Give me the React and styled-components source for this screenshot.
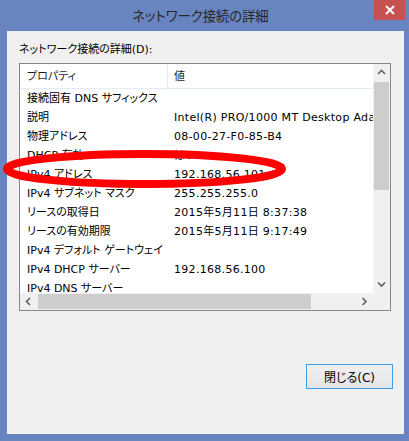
import React from 'react';
import styled, { createGlobalStyle } from 'styled-components';

const GlobalStyle = createGlobalStyle`
    html, body {
        margin: 0;
        padding: 0;
        background: #ffffff;
    }
    body {
        font-family: "DejaVu Sans", "Noto Sans CJK JP", sans-serif;
        font-feature-settings: "palt";
        font-size: 11px;
        color: #000000;
    }
`;

const rows = [
    ['接続固有 DNS サフィックス', ''],
    ['説明', 'Intel(R) PRO/1000 MT Desktop Adapter'],
    ['物理アドレス', '08-00-27-F0-85-B4'],
    ['DHCP 有効', 'はい'],
    ['IPv4 アドレス', '192.168.56.101'],
    ['IPv4 サブネット マスク', '255.255.255.0'],
    ['リースの取得日', '2015年5月11日 8:37:38'],
    ['リースの有効期限', '2015年5月11日 9:17:49'],
    ['IPv4 デフォルト ゲートウェイ', ''],
    ['IPv4 DHCP サーバー', '192.168.56.100'],
    ['IPv4 DNS サーバー', ''],
];

const Chevron = ({ dir }) => {
    const paths = {
        up: 'M1 5 L4.5 1.5 L8 5',
        down: 'M1 1.5 L4.5 5 L8 1.5',
        left: 'M5 1 L1.5 4.5 L5 8',
        right: 'M1.5 1 L5 4.5 L1.5 8',
    };
    const vertical = dir === 'up' || dir === 'down';
    return (
        <svg width={vertical ? 9 : 7} height={vertical ? 7 : 9} viewBox={vertical ? '0 0 9 7' : '0 0 7 9'}>
            <path d={paths[dir]} fill="none" stroke="#606060" strokeWidth="1.6" />
        </svg>
    );
};

const App = () => {
    return (
        <>
            <GlobalStyle />
            <Window>
                <TitleBar>
                    <Title>ネットワーク接続の詳細</Title>
                    <CloseButton>
                        <svg width="10" height="10" viewBox="0 0 10 10">
                            <path d="M1 1 L9 9 M9 1 L1 9" stroke="#ffffff" strokeWidth="2" />
                        </svg>
                    </CloseButton>
                </TitleBar>

                <Client>
                    <Label>ネットワーク接続の詳細(D):</Label>
                    <ListBox>
                        <ListContent>
                            <HeaderRow>
                                <HeaderCell>プロパティ</HeaderCell>
                                <HeaderCell>値</HeaderCell>
                            </HeaderRow>
                            {rows.map(([name, value]) => (
                                <Row key={name}>
                                    <Cell>{name}</Cell>
                                    <Cell $value>{value}</Cell>
                                </Row>
                            ))}
                        </ListContent>

                        {/* vertical scrollbar */}
                        <VScroll>
                            <ArrowBox><Chevron dir="up" /></ArrowBox>
                            <VThumb />
                            <Spacer />
                            <ArrowBox><Chevron dir="down" /></ArrowBox>
                        </VScroll>

                        {/* horizontal scrollbar */}
                        <HScroll>
                            <ArrowBox><Chevron dir="left" /></ArrowBox>
                            <HThumb />
                            <Spacer />
                            <ArrowBox><Chevron dir="right" /></ArrowBox>
                        </HScroll>
                        <Corner />
                    </ListBox>

                    <CloseDialogButton>閉じる(C)</CloseDialogButton>
                </Client>

                <Annotation width="409" height="441" viewBox="0 0 409 441">
                    <ellipse cx="144.5" cy="169" rx="137.5" ry="15" fill="none" stroke="#ff0000" strokeWidth="8" />
                </Annotation>
            </Window>
        </>
    );
};

export default App;

const Window = styled.div`
    position: relative;
    width: 409px;
    height: 441px;
    box-sizing: border-box;
    background: #6885c1;
    display: flex;
    flex-direction: column;
    padding: 0 5px 7px 7px;
`;

const TitleBar = styled.div`
    height: 31px;
    display: grid;
    grid-template-columns: 28px 1fr 28px;
    margin: 0 -5px 0 -7px;
    padding: 0 4px 0 0;
`;

const Title = styled.div`
    grid-column: 2;
    text-align: center;
    font-family: "Noto Sans CJK JP", sans-serif;
    font-size: 13.3px;
    line-height: 31px;
    color: #262626;
    padding-right: 4px;
    white-space: nowrap;
`;

const CloseButton = styled.div`
    grid-column: 3;
    justify-self: end;
    width: 31px;
    height: 20px;
    background: #c75050;
    display: flex;
    align-items: center;
    justify-content: center;
`;

const Client = styled.div`
    flex: 1;
    background: #f0f0f0;
    display: flex;
    flex-direction: column;
    padding: 11px 12px 0 12px;
`;

const Label = styled.div`
    line-height: 16px;
    margin-bottom: 5px;
    color: #000000;
`;

const ListBox = styled.div`
    width: 372px;
    height: 248px;
    box-sizing: border-box;
    border: 1px solid #828790;
    background: #ffffff;
    display: grid;
    grid-template-columns: 1fr 17px;
    grid-template-rows: 1fr 17px;
    overflow: hidden;
`;

const ListContent = styled.div`
    overflow: hidden;
    min-width: 0;
    min-height: 0;
`;

const HeaderRow = styled.div`
    display: grid;
    grid-template-columns: 147px 1fr;
    height: 25px;
    box-sizing: border-box;
    border-bottom: 1px solid #e3ebf4;
`;

const HeaderCell = styled.div`
    padding-left: 7px;
    line-height: 26px;
    white-space: nowrap;
    color: #1e1e1e;
    & + & {
        border-left: 1px solid #e3ebf4;
        padding-left: 6px;
    }
`;

const Row = styled.div`
    display: grid;
    grid-template-columns: 147px 1fr;
    height: 19px;
`;

const Cell = styled.div`
    padding-left: 7px;
    line-height: 19px;
    white-space: nowrap;
    letter-spacing: ${(p) => (p.$value ? '0.3px' : '0')};
`;

const VScroll = styled.div`
    background: #f0f0f0;
    display: flex;
    flex-direction: column;
    align-items: center;
`;

const HScroll = styled.div`
    background: #f0f0f0;
    display: flex;
    align-items: center;
`;

const ArrowBox = styled.div`
    width: 17px;
    height: 17px;
    flex: none;
    display: flex;
    align-items: center;
    justify-content: center;
`;

const Spacer = styled.div`
    flex: 1;
`;

const VThumb = styled.div`
    width: 15px;
    height: 108px;
    margin-top: 1px;
    background: #cdcdcd;
`;

const HThumb = styled.div`
    width: 273px;
    height: 15px;
    margin-left: 1px;
    background: #cdcdcd;
`;

const Corner = styled.div`
    background: #f0f0f0;
`;

const CloseDialogButton = styled.button`
    align-self: flex-end;
    margin-top: 53px;
    margin-right: -1px;
    width: 87px;
    height: 25px;
    box-sizing: border-box;
    border: 1px solid #3c9cf0;
    background: linear-gradient(#f0f0f0, #e5e5e5);
    font-family: inherit;
    font-feature-settings: "palt";
    font-size: 12px;
    color: #000000;
    padding: 0;
`;

const Annotation = styled.svg`
    position: absolute;
    left: 0;
    top: 0;
    pointer-events: none;
`;
